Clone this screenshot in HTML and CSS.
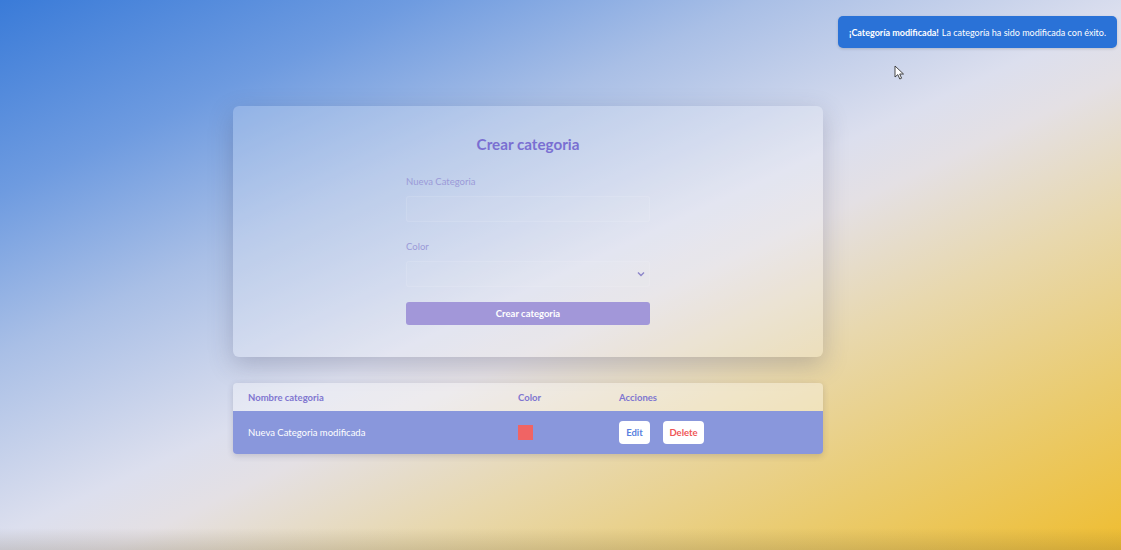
FILE: index.html
```html
<!DOCTYPE html>
<html lang="es">
<head>
<meta charset="utf-8">
<title>Categorías</title>
<link rel="stylesheet" href="styles.css">
</head>
<body>
<div class="page">
  <main class="content">
    <section class="card">
      <h1 class="title">Crear categoria</h1>
      <form class="form">
        <label class="label">Nueva Categoria</label>
        <div class="input"></div>
        <label class="label color-label">Color</label>
        <div class="input select">
          <svg class="chev" width="8" height="6" viewBox="0 0 8 6"><path d="M1 1.5 L4 4.5 L7 1.5" fill="none" stroke="#8d86c9" stroke-width="1.4"/></svg>
        </div>
        <button type="button" class="submit">Crear categoria</button>
      </form>
    </section>
    <section class="table">
      <div class="row head">
        <div class="c1">Nombre categoria</div>
        <div class="c2">Color</div>
        <div class="c3">Acciones</div>
      </div>
      <div class="row body">
        <div class="c1">Nueva Categoria modificada</div>
        <div class="c2"><span class="swatch"></span></div>
        <div class="c3 actions">
          <button type="button" class="btn edit">Edit</button>
          <button type="button" class="btn delete">Delete</button>
        </div>
      </div>
    </section>
  </main>
  <div class="toast"><b>¡Categoría modificada!</b> La categoría ha sido modificada con éxito.</div>
  <svg class="cursor" width="12" height="16" viewBox="0 0 12 16"><path d="M1 1 L1 12 L3.8 9.6 L5.8 14 L7.6 13.2 L5.7 9 L9.5 9 Z" fill="#fff" stroke="#333" stroke-width="0.9" stroke-linejoin="round"/></svg>
</div>
</body>
</html>
```
FILE: styles.css
```css
* { box-sizing: border-box; }
html, body { margin: 0; padding: 0; }
body {
  width: 1121px;
  height: 550px;
  overflow: hidden;
  font-family: "Lato", "Noto Sans", "Liberation Sans", sans-serif;
}
.page {
  position: relative;
  width: 1121px;
  height: 550px;
  background:
    linear-gradient(180deg, rgba(0,0,0,0) 96%, rgba(90,80,60,0.18) 100%),
    linear-gradient(155deg, #3a7bd8 0%, #6e9be0 18%, #a9bfe6 33%, #dcdfee 50%, #e4e0e4 56%, #e8d8ae 68%, #eacb6e 84%, #efbd30 100%);
}
.content {
  display: flex;
  flex-direction: column;
  width: 590px;
  margin-left: 233px;
  padding-top: 106px;
  gap: 26px;
}
.card {
  height: 251px;
  border-radius: 6px;
  background: rgba(255,255,255,0.2);
  box-shadow: 0 8px 24px rgba(60,60,90,0.25);
  display: flex;
  flex-direction: column;
  align-items: center;
  padding-top: 27px;
}
.title {
  margin: 0;
  font-size: 15.2px;
  font-weight: 700;
  color: #7a6fd2;
  line-height: 22px;
}
.form {
  width: 244px;
  display: flex;
  flex-direction: column;
  margin-top: 21px;
}
.label {
  font-size: 9.5px;
  color: #9b9ad8;
  line-height: 12px;
}
.color-label { margin-top: 19px; }
.input {
  margin-top: 8px;
  height: 26px;
  border: 1px solid rgba(255,255,255,0.1);
  border-radius: 3px;
  background: rgba(255,255,255,0.04);
}
.select {
  display: flex;
  align-items: center;
  justify-content: flex-end;
  padding-right: 4px;
}
.submit {
  margin-top: 15px;
  height: 23px;
  border: none;
  border-radius: 3px;
  background: #a297d9;
  color: #fff;
  font-family: inherit;
  font-size: 9.5px;
  font-weight: 700;
}
.table {
  border-radius: 4px;
  overflow: hidden;
  box-shadow: 0 2px 6px rgba(60,60,90,0.2);
}
.row {
  display: flex;
  align-items: center;
  padding-left: 15px;
}
.head {
  height: 28px;
  background: rgba(255,255,255,0.35);
  color: #8076d0;
  font-size: 9.5px;
  font-weight: 700;
}
.body {
  height: 43px;
  background: #8997dc;
  color: #fff;
  font-size: 9.5px;
}
.c1 { width: 270px; }
.c2 { width: 101px; display: flex; }
.c3 { flex: 1; }
.swatch {
  width: 15px;
  height: 15px;
  background: #f06464;
}
.actions { display: flex; gap: 13px; }
.btn {
  height: 23px;
  border: none;
  border-radius: 4px;
  background: #fff;
  font-family: inherit;
  font-size: 9.5px;
  font-weight: 700;
  padding: 0;
}
.edit { color: #5a7fe0; width: 31px; }
.delete { color: #ef5656; width: 41px; }
.toast {
  position: absolute;
  top: 16px;
  right: 4px;
  width: 279px;
  height: 32px;
  border-radius: 5px;
  background: #2a72d7;
  color: #fff;
  font-size: 9px;
  display: flex;
  align-items: center;
  justify-content: center;
  white-space: nowrap;
  box-shadow: 0 1px 3px rgba(0,0,0,0.15);
}
.toast b { margin-right: 3px; }
.cursor {
  position: absolute;
  left: 894px;
  top: 65px;
}
```
